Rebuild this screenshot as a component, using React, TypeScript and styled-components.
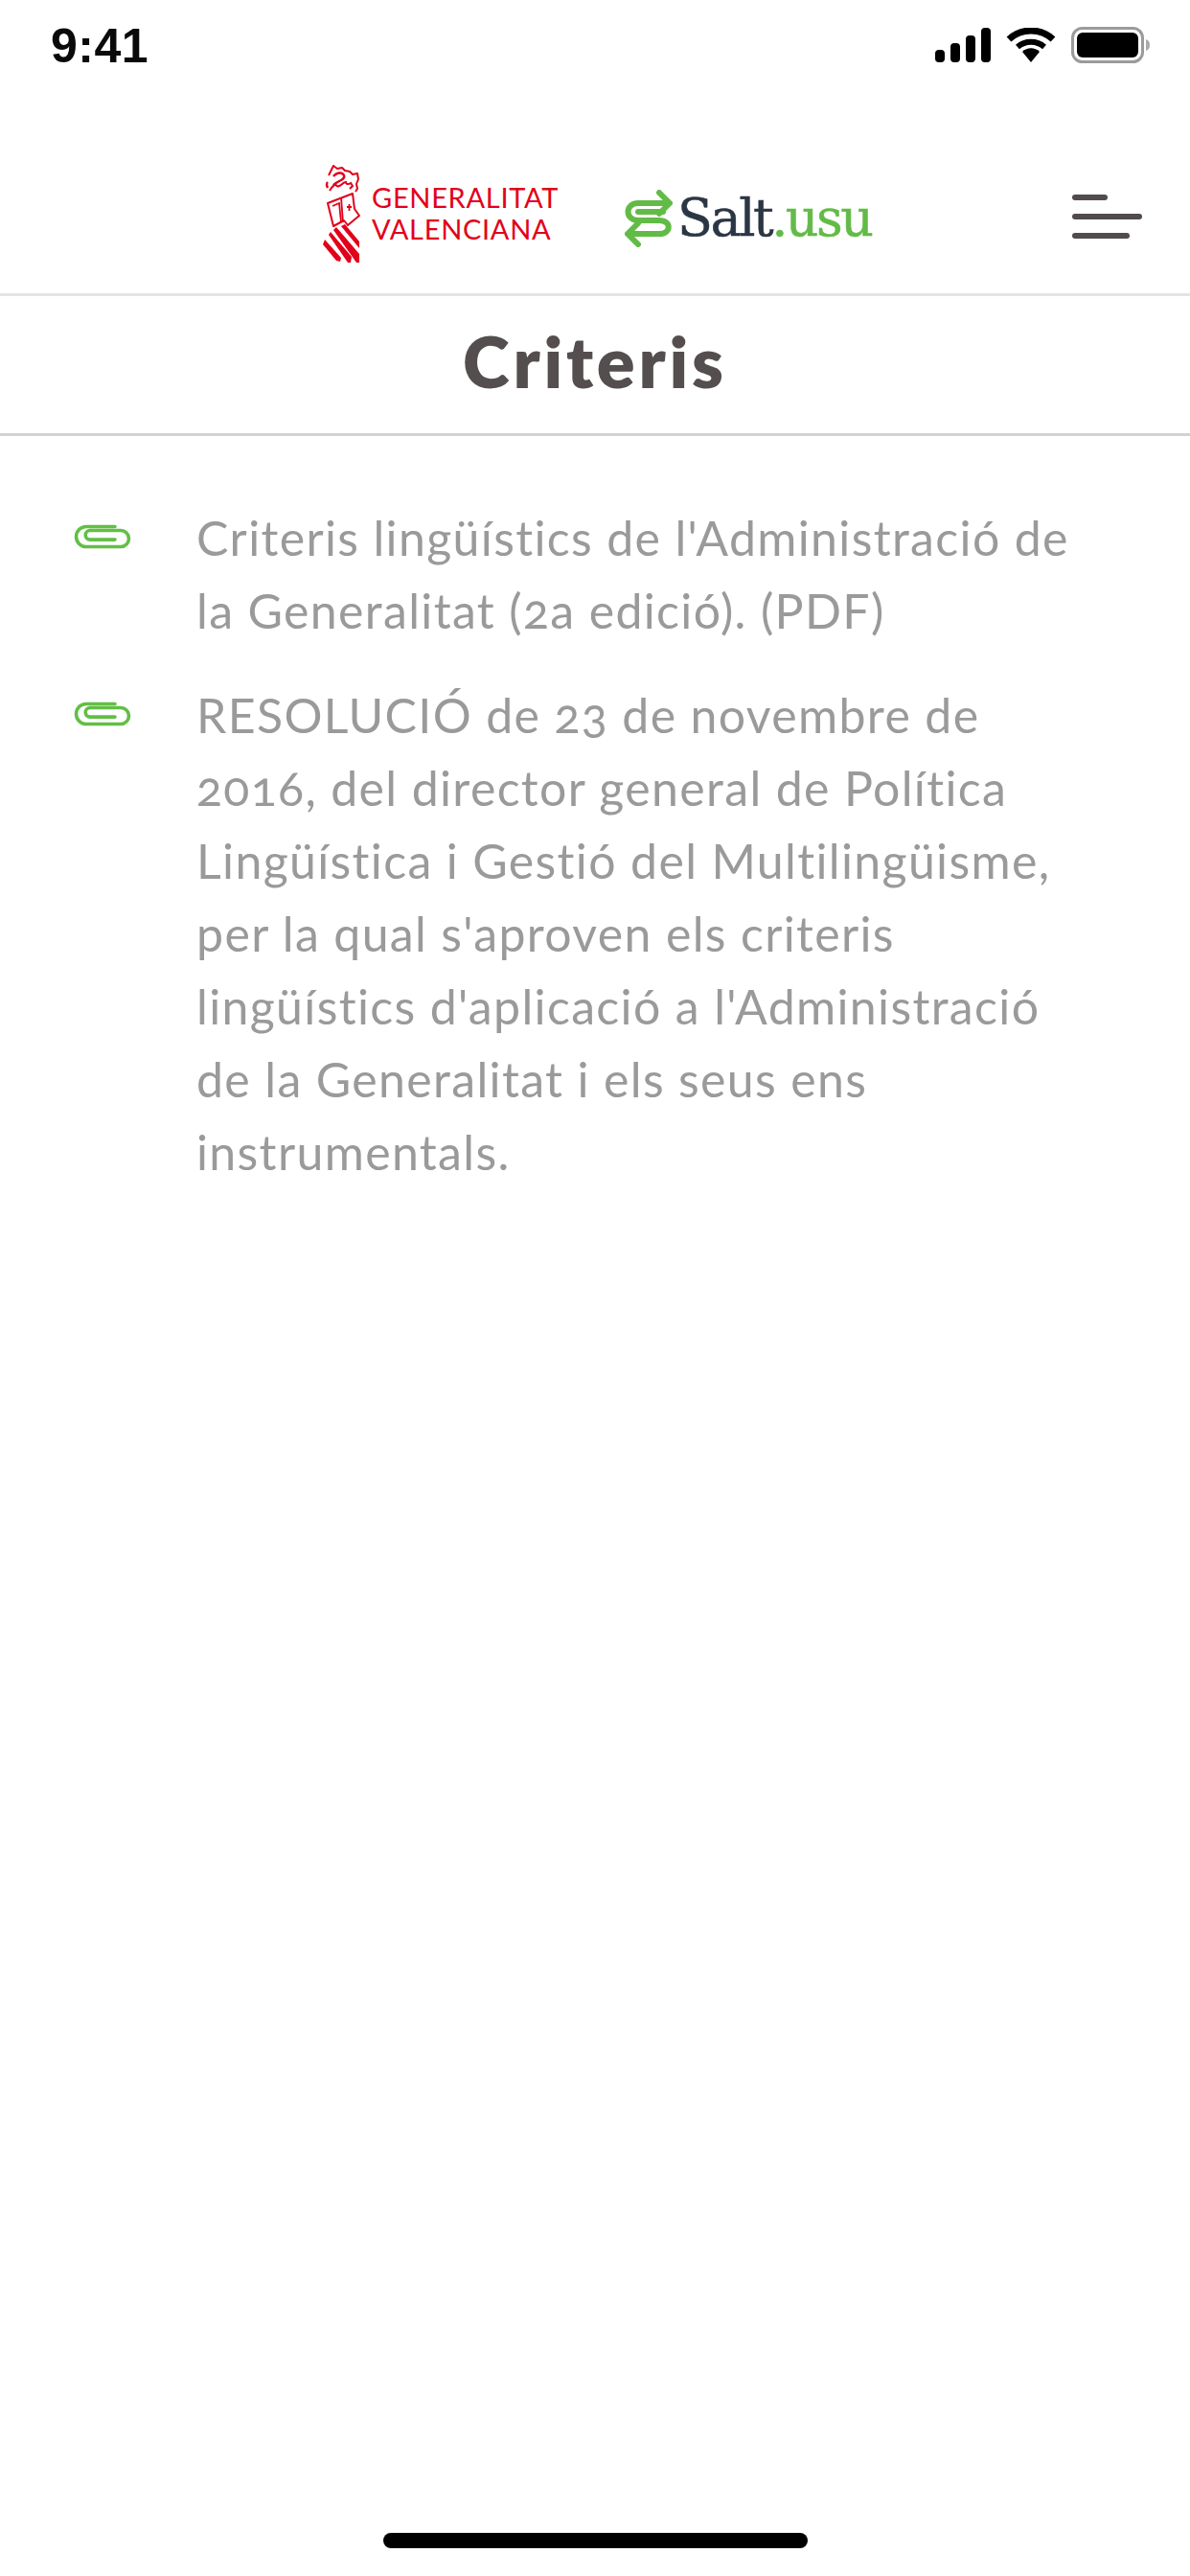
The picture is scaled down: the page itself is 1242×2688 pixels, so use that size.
import React, { FC } from "react";
import styled, { createGlobalStyle } from "styled-components";

const GlobalStyle = createGlobalStyle`
  html, body {
    margin: 0;
    padding: 0;
    background: #fff;
  }
  body {
    font-family: "Lato", "Open Sans", sans-serif;
  }
`;

const Screen = styled.div`
  position: relative;
  width: 1242px;
  height: 2688px;
  display: flex;
  flex-direction: column;
  background: #fff;
  overflow: hidden;
`;

const StatusBar = styled.div`
  height: 100px;
  box-sizing: border-box;
  padding: 21px 42px 0 53px;
  display: flex;
  justify-content: space-between;
  align-items: flex-start;
`;

const Clock = styled.span`
  font-family: "Liberation Sans", sans-serif;
  font-weight: 700;
  font-size: 50px;
  line-height: 54px;
  letter-spacing: 0.5px;
  color: #0a0a0a;
`;

const StatusIcons = styled.div`
  display: flex;
  align-items: center;
  gap: 13px;
  margin-top: 7px;
`;

const Header = styled.header`
  height: 206px;
  box-sizing: border-box;
  padding: 68px 50px 0 336px;
  display: flex;
  align-items: flex-start;
`;

const GvaLogo = styled.div`
  display: flex;
  gap: 10px;
  width: 316px;
  margin-top: 4px;
`;

const GvaText = styled.div`
  font-weight: 400;
  color: #e2001a;
  font-size: 29px;
  line-height: 33px;
  margin-top: 17px;
  letter-spacing: 0.7px;
  white-space: nowrap;
`;

const SaltLogo = styled.div`
  display: flex;
  align-items: center;
  gap: 5px;
  margin-top: 30px;
`;

const SaltName = styled.span`
  font-family: "DejaVu Serif", serif;
  font-size: 54px;
  line-height: 60px;
  letter-spacing: -2.5px;
  -webkit-text-stroke: 0.5px currentColor;
  color: #2b3644;
  white-space: nowrap;
`;

const SaltSuffix = styled.span`
  color: #62bb46;
`;

const Burger = styled.button`
  margin: 35px 0 0 auto;
  padding: 0;
  border: 0;
  background: none;
  width: 73px;
  display: flex;
  flex-direction: column;
  gap: 14px;
`;

const BurgerBar = styled.span<{ $w: number }>`
  display: block;
  height: 6px;
  width: ${(p) => p.$w}px;
  border-radius: 3px;
  background: #514b4d;
`;

const TitleBar = styled.div`
  height: 149px;
  box-sizing: border-box;
  padding-bottom: 8px;
  border-top: 3px solid #e4e4e4;
  border-bottom: 3px solid #d2d2d2;
  display: flex;
  align-items: center;
  justify-content: center;
`;

const Title = styled.h1`
  margin: 0;
  font-weight: 800;
  font-size: 74px;
  letter-spacing: 3.8px;
  color: #544e4f;
`;

const DocList = styled.ul`
  list-style: none;
  margin: 0;
  padding: 68px 0 0 77px;
  display: flex;
  flex-direction: column;
  gap: 33px;
`;

const DocItem = styled.li`
  display: flex;
  align-items: flex-start;
`;

const ClipIcon = styled.svg`
  flex: none;
  width: 60px;
  height: 26px;
  margin: 24px 68px 0 0;
`;

const DocText = styled.a`
  font-size: 50px;
  line-height: 76px;
  letter-spacing: 1.35px;
  font-variant-numeric: oldstyle-nums;
  color: #9a9a9a;
  white-space: pre-line;
`;

const HomeIndicator = styled.div`
  position: absolute;
  left: 400px;
  bottom: 29px;
  width: 443px;
  height: 16px;
  border-radius: 8px;
  background: #000;
`;

const docs = [
  "Criteris lingüístics de l'Administració de\nla Generalitat (2a edició). (PDF)",
  "RESOLUCIÓ de 23 de novembre de\n2016, del director general de Política\nLingüística i Gestió del Multilingüisme,\nper la qual s'aproven els criteris\nlingüístics d'aplicació a l'Administració\nde la Generalitat i els seus ens\ninstrumentals.",
];

const Clip: FC = () => (
  <ClipIcon viewBox="0 0 60 26" fill="none" stroke="#62bf45" strokeWidth="3.6" strokeLinecap="round">
    <path d="M43 2.5H13a10.5 10.5 0 0 0 0 21h36a8.5 8.5 0 0 0 0-17H17a4.8 4.8 0 0 0 0 9.6h26" />
  </ClipIcon>
);

const GvaShield: FC = () => (
  <svg width="42" height="104" viewBox="0 0 42 104" fill="none" stroke="#e2001a" style={{ flex: "none" }}>
    <path d="M7 11l2-4 3-6 4 3 5-1 3 3 5 1 3 3 5-1 1 6-2 5 1 5-2 3" strokeWidth="2" strokeLinejoin="round" />
    <path d="M12 12c3-4 9-5 11-1 2 5-8 6-11 10M6 18c-2 2-1 4 0 6" strokeWidth="2.400" />
    <path d="M8 27c2-4 4-5 6-7 1 2 2 3 4 2 3-1 4-4 7-4 0 2 2 3 5 1l2 3-3 3" strokeWidth="2" />
    <path d="M6 40l26-10 2 16 5 7-12 10-4-5-11 6z" strokeWidth="2" strokeLinejoin="round" />
    <path d="M20 34l2 26M11 43l7-3 2 20M26 44h5M28.500 41v7" strokeWidth="1.800" />
    <g stroke="none" fill="#e2001a">
      <polygon points="20,64 24,62 39,80 39,87" />
      <polygon points="12,68 15,65 39,93 39,102 36,102" />
      <polygon points="7,73 9,70 31,96 30,102 27,102" />
      <polygon points="1,83 3,78 20,97 19,101 15,100" />
    </g>
  </svg>
);

const App: FC = () => (
  <Screen>
    <GlobalStyle />
    <StatusBar>
      <Clock>9:41</Clock>
      <StatusIcons>
        <svg width="58" height="36" viewBox="0 0 58 36" fill="#000">
          <rect x="0" y="23" width="10" height="13" rx="4" />
          <rect x="16" y="16" width="10" height="20" rx="4" />
          <rect x="32" y="8" width="10" height="28" rx="4" />
          <rect x="48" y="0" width="10" height="36" rx="4" />
        </svg>
        <svg width="58" height="36" viewBox="0 0 52 36">
          <path d="M3 12C16 0 36 0 49 12" fill="none" stroke="#000" strokeWidth="7" />
          <path d="M12 20c8-7 20-7 28 0" fill="none" stroke="#000" strokeWidth="6" />
          <path d="M17 25c5-5 13-5 18 0l-9 11z" fill="#000" />
        </svg>
        <svg width="82" height="38" viewBox="0 0 82 38">
          <rect x="1.5" y="1.5" width="73" height="35" rx="10" fill="none" stroke="#9b9b9b" strokeWidth="3" />
          <rect x="6" y="6" width="64" height="26" rx="6" fill="#000" />
          <path d="M78 13c3 1 4 3 4 6s-1 5-4 6z" fill="#aaa" />
        </svg>
      </StatusIcons>
    </StatusBar>
    <Header>
      <GvaLogo>
        <GvaShield />
        <GvaText>
          GENERALITAT
          <br />
          VALENCIANA
        </GvaText>
      </GvaLogo>
      <SaltLogo>
        <svg width="50" height="60" viewBox="0 0 50 60" fill="none" stroke="#62bb46" strokeWidth="6" strokeLinecap="round" strokeLinejoin="round">
          <path d="M36 3l11 11-11 11M46 14H14C0 14 0 32 14 32h22c13 0 13 14 0 14H4" />
          <path d="M14 35L3 46l11 11" />
          <path d="M14 23h26" />
        </svg>
        <SaltName>
          Salt<SaltSuffix>.usu</SaltSuffix>
        </SaltName>
      </SaltLogo>
      <Burger aria-label="Menú">
        <BurgerBar $w={37} />
        <BurgerBar $w={73} />
        <BurgerBar $w={60} />
      </Burger>
    </Header>
    <TitleBar>
      <Title>Criteris</Title>
    </TitleBar>
    <DocList>
      {docs.map((text) => (
        <DocItem key={text}>
          <Clip />
          <DocText>{text}</DocText>
        </DocItem>
      ))}
    </DocList>
    <HomeIndicator />
  </Screen>
);

export default App;
